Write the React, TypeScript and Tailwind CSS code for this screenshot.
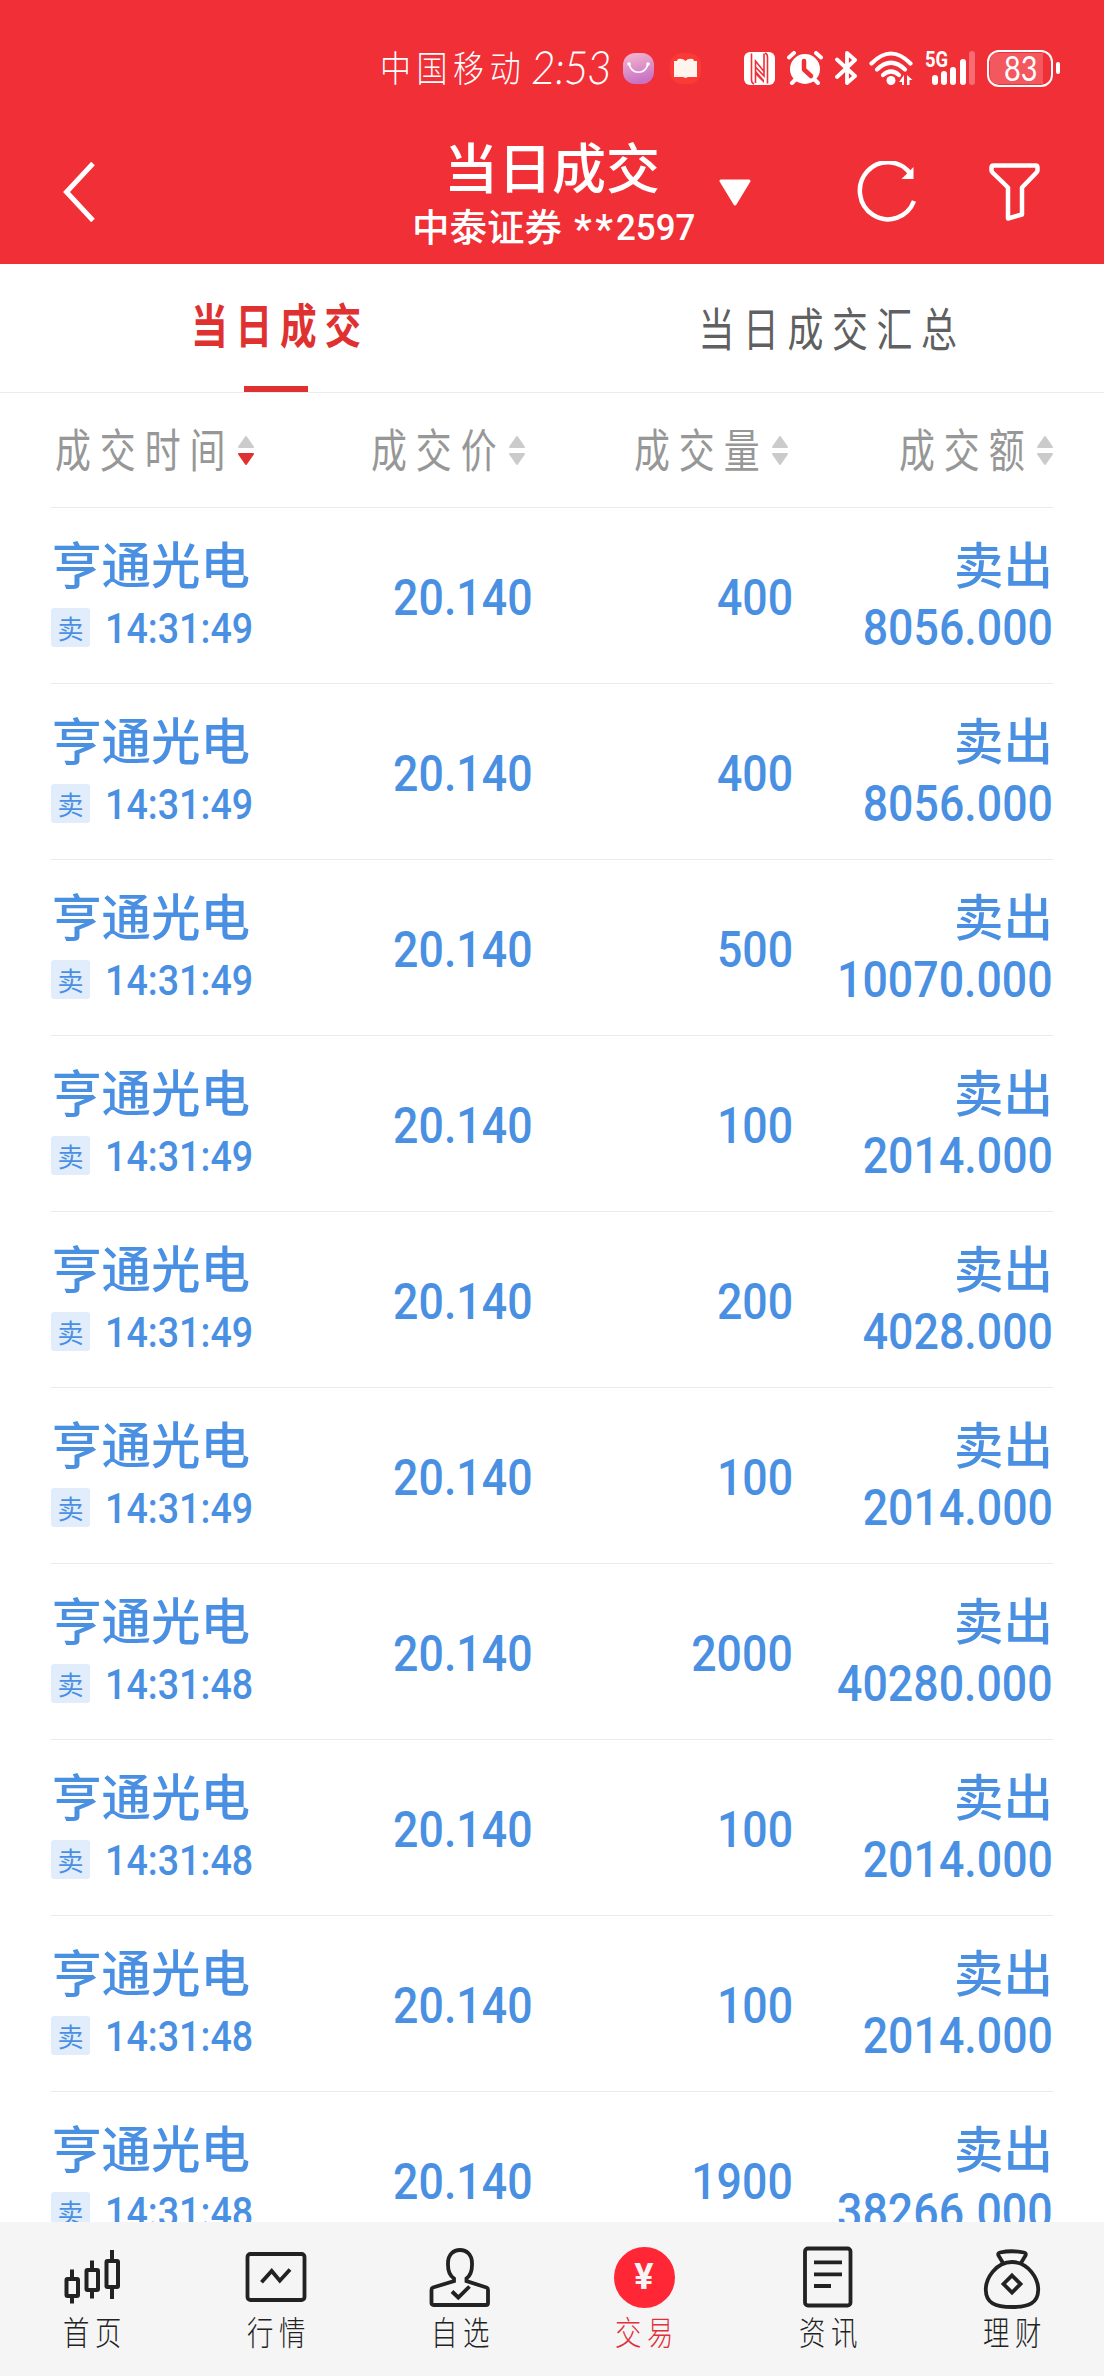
import React from 'react';
import clsx from 'clsx';

interface Trade {
    time: string;
    volume: string;
    amount: string;
}

const STOCK = '亨通光电';
const PRICE = '20.140';

const trades: Trade[] = [
    { time: '14:31:49', volume: '400', amount: '8056.000' },
    { time: '14:31:49', volume: '400', amount: '8056.000' },
    { time: '14:31:49', volume: '500', amount: '10070.000' },
    { time: '14:31:49', volume: '100', amount: '2014.000' },
    { time: '14:31:49', volume: '200', amount: '4028.000' },
    { time: '14:31:49', volume: '100', amount: '2014.000' },
    { time: '14:31:48', volume: '2000', amount: '40280.000' },
    { time: '14:31:48', volume: '100', amount: '2014.000' },
    { time: '14:31:48', volume: '100', amount: '2014.000' },
    { time: '14:31:48', volume: '1900', amount: '38266.000' },
];

function StatusBar() {
    return (
        <div className="flex h-10 items-center pl-[380px] text-white">
            <div className="w-[152px] shrink-0 pb-1">
                <span className="inline-block origin-left scale-x-[0.86] whitespace-nowrap text-[36px] leading-10 font-light tracking-[6.5px]">中国移动</span>
            </div>
            <div className="w-[91px] shrink-0">
                <span className="inline-block origin-left scale-x-[0.87] -skew-x-6 whitespace-nowrap font-[Lato,sans-serif] text-[46px] leading-10 font-light">2:53</span>
            </div>
            <svg width="31" height="31" viewBox="0 0 31 31" className="shrink-0">
                <defs>
                    <linearGradient id="bag" x1="0" y1="0" x2="0.3" y2="1">
                        <stop offset="0" stopColor="#f6b9cf" />
                        <stop offset="1" stopColor="#c873c4" />
                    </linearGradient>
                </defs>
                <rect width="31" height="31" rx="12" fill="url(#bag)" />
                <path d="M6 11C9 22 22 22 25 11" fill="none" stroke="#fff" strokeWidth="1.6" />
                <circle cx="6" cy="11" r="1.8" fill="#fff" />
                <circle cx="25" cy="11" r="1.8" fill="#fff" />
            </svg>
            <svg width="31" height="31" viewBox="0 0 31 31" className="ml-4 shrink-0">
                <rect width="31" height="31" rx="12" fill="#fb3a36" />
                <path d="M4 8L7 8L8 6Q13 5 15.500 8Q18 5 23 6L24 8L27 8V24H18L15.500 25L13 24H4Z" fill="#fff4ee" />
            </svg>
            <svg width="31" height="33" viewBox="0 0 31 33" className="ml-[43px] shrink-0">
                <rect width="31" height="33" rx="6" fill="#fff" />
                <path d="M7.500 1.500V28Q7.500 31 10 32M23.500 31.500V5Q23.500 2 21 1" fill="none" stroke="#f12f37" strokeWidth="1.600" />
                <path d="M11.500 31V9L20 19.500M20 1.500V24L11.500 15" fill="none" stroke="#f12f37" strokeWidth="1.600" />
                <path d="M12 19L20 28V31L12 23Z" fill="#f12f37" />
            </svg>
            <svg width="36" height="34" viewBox="0 0 36 34" className="ml-3 shrink-0">
                <circle cx="18" cy="18" r="15" fill="#fff" />
                <path d="M2 6.500L7 2M34 6.500L29 2M5 32L9 28M31 32L27 28" stroke="#fff" strokeWidth="4" strokeLinecap="round" />
                <path d="M17 10V18.500L24 25" fill="none" stroke="#f12f37" strokeWidth="4.500" strokeLinecap="round" strokeLinejoin="round" />
            </svg>
            <svg width="22" height="34" viewBox="0 0 22 34" className="ml-3 shrink-0" fill="none" stroke="#fff" strokeWidth="3.800" strokeLinecap="round" strokeLinejoin="round">
                <path d="M2 8.500L20 25L12 32V2L20 9L2 26" />
            </svg>
            <svg width="44" height="34" viewBox="0 0 44 34" className="ml-3 shrink-0" fill="none" stroke="#fff" strokeWidth="4.200" strokeLinecap="round">
                <path d="M2.500 12.500Q22 -7.500 41.500 12.500" />
                <path d="M8 18.500Q22 5 36 18.500" />
                <path d="M14 24Q22 17 30 24" />
                <circle cx="22" cy="29.500" r="4.500" fill="#fff" stroke="none" />
                <path d="M35 24V34H33V31H30ZM38 34V24L43.500 29H40.500V34Z" fill="#fff" stroke="none" />
            </svg>
            <div className="ml-3 flex h-[34px] w-[50px] shrink-0 items-end">
                <span className="w-[7px] self-start overflow-visible">
                    <span className="block origin-left scale-x-[0.82] font-[Roboto,sans-serif] text-[22.5px] leading-[17px] font-bold">5G</span>
                </span>
                <span className="h-[10px] w-[6px] rounded-full bg-white" />
                <span className="ml-[3px] h-[14px] w-[6px] rounded-full bg-white" />
                <span className="ml-[3px] h-[18px] w-[6px] rounded-full bg-white" />
                <span className="ml-[4px] h-[26px] w-[6px] rounded-full bg-white" />
                <span className="ml-[3px] h-[34px] w-[6px] rounded-full bg-white/30" />
            </div>
            <div className="ml-3 flex h-[37px] w-[66px] shrink-0 items-center rounded-[12px] border-[2.5px] border-white p-px">
                <div className="flex h-full w-[53px] items-center justify-center rounded-l-[8px] bg-white/20 pl-2">
                    <span className="scale-x-[0.85] font-[Lato,sans-serif] text-[34px] leading-none font-normal">83</span>
                </div>
            </div>
            <span className="ml-[3px] h-[12px] w-[4px] shrink-0 rounded-full bg-white" />
        </div>
    );
}

function Header() {
    return (
        <header className="h-[264px] bg-[#f12f37] pt-12 text-white">
            <StatusBar />
            <div className="mt-8 flex h-36 items-center">
                <svg width="32" height="60" viewBox="0 0 32 60" className="ml-[63px] shrink-0" fill="none" stroke="#fff" strokeWidth="5">
                    <path d="M30 1.500L3.500 30L30 58.500" />
                </svg>
                <div className="ml-[317px] w-[280px] shrink-0 pt-1 text-center">
                    <h1 className="text-[54px] leading-[62px] font-medium">当日成交</h1>
                    <div className="flex h-[56px] items-center text-[37.5px] leading-[56px] font-medium whitespace-nowrap">
                        <span>中泰证券</span>
                        <span className="ml-3 pt-2.5 font-[Roboto,sans-serif] text-[40px] tracking-[3.5px]">**</span>
                        <span className="origin-left scale-x-[0.93] pt-1 font-[Roboto,sans-serif]">2597</span>
                    </div>
                </div>
                <svg width="32" height="27" viewBox="0 0 32 27" className="ml-[27px] shrink-0">
                    <path d="M2 2H30L16 25Z" fill="#fff" stroke="#fff" strokeWidth="3" strokeLinejoin="round" />
                </svg>
                <svg width="60" height="62" viewBox="0 0 60 62" className="ml-[106px] shrink-0">
                    <path d="M53.500 13A28 28.500 0 1 0 57 40" fill="none" stroke="#fff" strokeWidth="4.500" />
                    <path d="M56.500 6V18H44.500Z" fill="#fff" />
                </svg>
                <svg width="51" height="58" viewBox="0 0 51 58" className="ml-[72px] shrink-0" fill="none" stroke="#fff" strokeWidth="4.500" strokeLinejoin="round">
                    <path d="M4.500 2.500H46.500Q48.500 2.500 48.500 4.500V7.500Q48.500 8.500 47.500 9.500L33 24.500V51.500L19 55.500V24.500L3.500 9.500Q2.500 8.500 2.500 7.500V4.500Q2.500 2.500 4.500 2.500Z" />
                </svg>
            </div>
        </header>
    );
}

function Tabs() {
    return (
        <div className="grid h-[129px] grid-cols-2 border-b border-[#ececec]">
            <div className="flex flex-col items-center text-[#e03131]">
                <span className="mt-[31px] -mr-2 scale-x-[0.78] text-[47px] leading-[56px] font-bold tracking-[10px]">当日成交</span>
                <span className="mt-auto h-1.5 w-16 bg-[#e03131]" />
            </div>
            <div className="flex justify-center text-[#606060]">
                <span className="mt-[34px] -mr-2 scale-x-[0.78] whitespace-nowrap text-[46px] leading-[56px] tracking-[11px]">当日成交汇总</span>
            </div>
        </div>
    );
}

interface SortHeadProps {
    label: string;
    width: string;
    active?: boolean;
}

function SortHead({ label, width, active }: SortHeadProps) {
    return (
        <div className="flex items-center">
            <div className={clsx('shrink-0 pb-1.5', width)}>
                <span className="inline-block origin-left scale-x-[0.78] whitespace-nowrap text-[46px] leading-[56px] tracking-[11.5px] text-[#979797]">{label}</span>
            </div>
            <svg width="16" height="31" viewBox="0 0 16 31" className="shrink-0" strokeWidth="2" strokeLinejoin="round">
                <path d="M1 12L8 2L15 12Z" fill="#cbcbcb" stroke="#cbcbcb" />
                <path d="M1 19L8 29L15 19Z" fill={active ? '#e03131' : '#cbcbcb'} stroke={active ? '#e03131' : '#cbcbcb'} />
            </svg>
        </div>
    );
}

function TableHead() {
    return (
        <div className="flex h-[115px] shrink-0 items-center border-b border-[#ebebeb]">
            <div className="w-[203px] pl-[4px]">
                <SortHead label="成交时间" width="w-[183px]" active />
            </div>
            <div className="flex w-[271px] justify-end">
                <SortHead label="成交价" width="w-[138px]" />
            </div>
            <div className="flex w-[263px] justify-end">
                <SortHead label="成交量" width="w-[138px]" />
            </div>
            <div className="flex flex-1 justify-end">
                <SortHead label="成交额" width="w-[138px]" />
            </div>
        </div>
    );
}

function Figure({ value }: { value: string }) {
    return (
        <span className="inline-block origin-right scale-x-[0.885] whitespace-nowrap font-[Roboto,sans-serif] text-[50.5px] leading-[62px] font-medium">{value}</span>
    );
}

function TradeRow({ trade }: { trade: Trade }) {
    return (
        <div className="flex h-44 shrink-0 items-center border-b border-[#ebebeb] text-[#4a90e2]">
            <div className="w-[203px] shrink-0">
                <div className="mb-1 pl-px text-[49.5px] leading-[60px] font-medium whitespace-nowrap">{STOCK}</div>
                <div className="flex h-[62px] items-center">
                    <span className="flex size-[39px] shrink-0 items-center justify-center rounded-[3px] bg-[#e1edfb] text-[26px] leading-none">卖</span>
                    <span className="ml-[15px] origin-left scale-x-[0.875] pt-px font-[Roboto,sans-serif] text-[43px] leading-[61px] font-medium">{trade.time}</span>
                </div>
            </div>
            <div className="w-[279px] shrink-0 pt-1 text-right">
                <Figure value={PRICE} />
            </div>
            <div className="w-[260px] shrink-0 pt-1 text-right">
                <Figure value={trade.volume} />
            </div>
            <div className="flex flex-1 flex-col items-end">
                <span className="mb-1 text-[49.5px] leading-[60px] font-medium">卖出</span>
                <Figure value={trade.amount} />
            </div>
        </div>
    );
}

const navIcons: Record<string, React.ReactNode> = {
    home: (
        <g strokeWidth="4">
            <rect x="6.500" y="34" width="11.500" height="17" rx="1" />
            <rect x="26.500" y="25" width="11.500" height="20" rx="1" />
            <rect x="46.500" y="16" width="11.500" height="26" rx="1" />
            <path d="M12 24.500V34M12 51V58.500M32 15.500V25M32 45V53.500M52 5V16M52 42V54" />
        </g>
    ),
    market: (
        <g>
            <rect x="3.500" y="9" width="57" height="46" rx="3" />
            <path d="M17.500 37.300L27.700 26L35.800 35.700L46 24.500" />
        </g>
    ),
    watchlist: (
        <g>
            <path d="M26 33.500C21.500 30.500 20 27 20 20V18C20 10 25 5 32 5S44 10 44 18V20C44 27 42.500 30.500 38.500 33.500V36L58.500 42.500Q60 43 60 45V58Q60 60 58 60H5.500Q3.500 60 3.500 58V45Q3.500 43 5 42.500L26 36Z" />
            <path d="M24 46.500L30.300 52.500L41.500 41.500" />
        </g>
    ),
    news: (
        <g>
            <rect x="9" y="3.500" width="45.500" height="57" rx="3" />
            <path d="M18 17.300H46M18 29.300H46M18 41H35" />
        </g>
    ),
    wealth: (
        <g>
            <path d="M32 17C15.500 17 5.500 34 5.800 45C6 58 15 62 32 62S58 58 58.200 45C58.500 34 48.500 17 32 17Z" />
            <path d="M23 18L18.500 10.500Q17.500 8 20 7.500Q32 5 44 7.500Q46.500 8 45.500 10.500L41 18" />
            <path d="M32 30.500L40.500 39L32 47.500L23.500 39Z" />
        </g>
    ),
};

const navItems = [
    { label: '首页', icon: 'home' },
    { label: '行情', icon: 'market' },
    { label: '自选', icon: 'watchlist' },
    { label: '交易', icon: 'trade' },
    { label: '资讯', icon: 'news' },
    { label: '理财', icon: 'wealth' },
];

function BottomNav() {
    return (
        <nav className="grid h-[154px] shrink-0 grid-cols-6 bg-[#f5f5f5] pt-[23px]">
            {navItems.map(({ label, icon }) => (
                <div key={label} className={clsx('flex flex-col items-center', icon === 'trade' ? 'text-[#e0303c]' : 'text-[#222]')}>
                    {icon === 'trade' ? (
                        <div className="flex size-16 items-center justify-center">
                            <span className="flex size-[61px] items-center justify-center rounded-full bg-[#ff2636] font-[Roboto,sans-serif] text-[36px] leading-none font-bold text-[#f5f5f5]">¥</span>
                        </div>
                    ) : (
                        <svg width="64" height="64" viewBox="0 0 64 64" fill="none" stroke="#222" strokeWidth="3.800">
                            {navIcons[icon]}
                        </svg>
                    )}
                    <span className="mt-[2px] -mr-1.5 scale-x-[0.8] text-[33px] leading-[40px] font-light tracking-[7px]">{label}</span>
                </div>
            ))}
        </nav>
    );
}

export default function App() {
    return (
        <div className="flex h-[2376px] w-[1104px] flex-col overflow-hidden bg-white font-['Noto_Sans_CJK_SC',sans-serif]">
            <Header />
            <Tabs />
            <main className="flex min-h-0 flex-1 flex-col overflow-hidden px-[51px]">
                <TableHead />
                {trades.map((trade, i) => (
                    <TradeRow key={i} trade={trade} />
                ))}
            </main>
            <BottomNav />
        </div>
    );
}
